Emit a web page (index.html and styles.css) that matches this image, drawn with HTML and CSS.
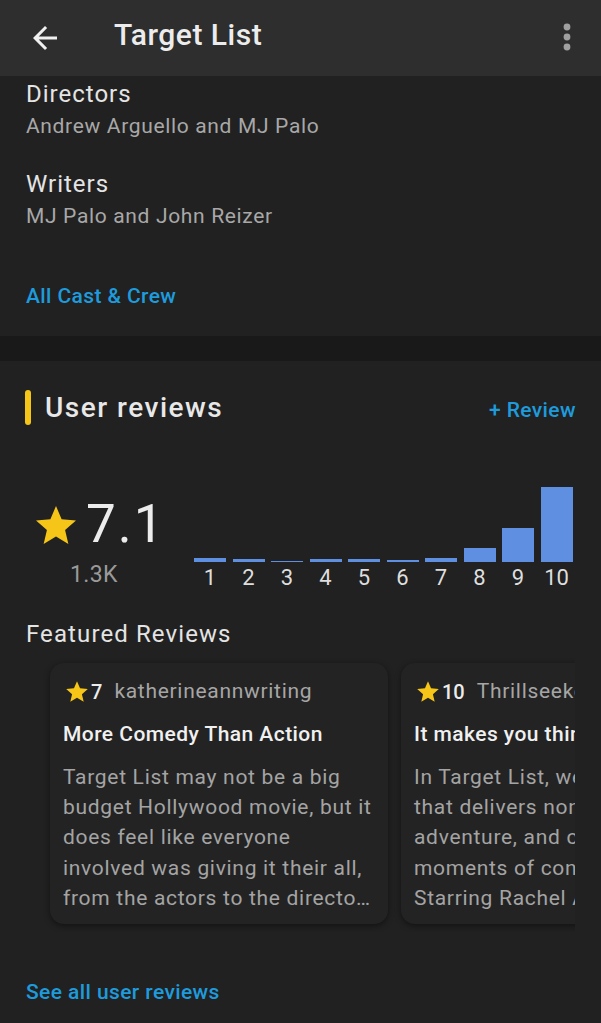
FILE: index.html
```html
<!DOCTYPE html>
<html>
<head>
<meta charset="utf-8">
<link rel="stylesheet" href="styles.css">
</head>
<body>
<header class="appbar">
  <svg class="back" width="36" height="36" viewBox="0 0 24 24"><path d="M20 11H7.83l5.59-5.59L12 4l-8 8 8 8 1.41-1.41L7.83 13H20v-2z" fill="#f0f0f0"/></svg>
  <h1 class="title">Target List</h1>
  <svg class="more" width="8" height="30" viewBox="0 0 8 30"><circle cx="4" cy="5" r="3.4" fill="#a0a0a0"/><circle cx="4" cy="15" r="3.4" fill="#a0a0a0"/><circle cx="4" cy="25" r="3.4" fill="#a0a0a0"/></svg>
</header>

<section class="crew">
  <div class="credit">
    <div class="credit-role">Directors</div>
    <div class="credit-names">Andrew Arguello and MJ Palo</div>
  </div>
  <div class="credit">
    <div class="credit-role">Writers</div>
    <div class="credit-names">MJ Palo and John Reizer</div>
  </div>
  <a class="link crew-link">All Cast &amp; Crew</a>
</section>

<div class="band"></div>

<section class="reviews">
  <div class="reviews-head">
    <h2 class="section-title"><span class="accent"></span>User reviews</h2>
    <a class="link add-review">+ Review</a>
  </div>

  <div class="rating-row">
    <div class="rating-summary">
      <div class="rating-main">
        <svg class="big-star" width="48" height="48" viewBox="0 0 24 24"><path d="M12 17.27L18.18 21l-1.64-7.03L22 9.24l-7.19-.61L12 2 9.19 8.63 2 9.24l5.46 4.73L5.82 21z" fill="#f5c518"/></svg>
        <span class="rating-value">7.1</span>
      </div>
      <div class="rating-count">1.3K</div>
    </div>
    <div class="histogram">
      <div class="hcol"><div class="bar" style="height:4px"></div><span>1</span></div>
      <div class="hcol"><div class="bar" style="height:3px"></div><span>2</span></div>
      <div class="hcol"><div class="bar" style="height:1px"></div><span>3</span></div>
      <div class="hcol"><div class="bar" style="height:3px"></div><span>4</span></div>
      <div class="hcol"><div class="bar" style="height:3px"></div><span>5</span></div>
      <div class="hcol"><div class="bar" style="height:2px"></div><span>6</span></div>
      <div class="hcol"><div class="bar" style="height:4px"></div><span>7</span></div>
      <div class="hcol"><div class="bar" style="height:14px"></div><span>8</span></div>
      <div class="hcol"><div class="bar" style="height:34px"></div><span>9</span></div>
      <div class="hcol"><div class="bar" style="height:75px"></div><span>10</span></div>
    </div>
  </div>

  <h3 class="featured-title">Featured Reviews</h3>

  <div class="carousel">
    <article class="card">
      <div class="card-meta">
        <svg class="small-star" width="26" height="26" viewBox="0 0 24 24"><path d="M12 17.27L18.18 21l-1.64-7.03L22 9.24l-7.19-.61L12 2 9.19 8.63 2 9.24l5.46 4.73L5.82 21z" fill="#f5c518"/></svg>
        <span class="card-score">7</span>
        <span class="card-user">katherineannwriting</span>
      </div>
      <div class="card-title">More Comedy Than Action</div>
      <p class="card-body"><span class="body-lead">Target List may not be a big budget Hollywood movie, but it does feel like everyone involved was giving it their all,</span><span class="body-tail">from the actors to the directors and writers.</span></p>
    </article>
    <article class="card">
      <div class="card-meta">
        <svg class="small-star" width="26" height="26" viewBox="0 0 24 24"><path d="M12 17.27L18.18 21l-1.64-7.03L22 9.24l-7.19-.61L12 2 9.19 8.63 2 9.24l5.46 4.73L5.82 21z" fill="#f5c518"/></svg>
        <span class="card-score">10</span>
        <span class="card-user">Thrillseeker</span>
      </div>
      <div class="card-title">It makes you think</div>
      <p class="card-body"><span class="body-lead">In Target List, we get a film that delivers nonstop action, adventure, and comedic moments of constant fun.</span><span class="body-tail">Starring Rachel Amanda Bryant and more.</span></p>
    </article>
  </div>

  <a class="link all-reviews">See all user reviews</a>
</section>
</body>
</html>
```

FILE: styles.css
```css
* { box-sizing: border-box; }
html, body { margin: 0; padding: 0; }
body {
  background: #212121;
  font-family: Roboto, "Noto Sans", sans-serif;
  color: #e6e6e6;
  width: 601px;
  height: 1023px;
  overflow: hidden;
}
.appbar {
  height: 76px;
  background: #2e2e2e;
  display: flex;
  align-items: center;
  padding: 0 0 7px 27px;
}
.back { flex: none; margin-top: 7px; }
.title {
  margin: 0 0 0 51px;
  font-size: 30px;
  line-height: 36px;
  font-weight: 500;
  color: #ececec;
  flex: 1;
  letter-spacing: 0.5px;
}
.more { margin-right: 30px; margin-top: 5px; }

.crew {
  padding: 3px 26px 27px;
}
.credit + .credit { margin-top: 28px; }
.credit-role {
  font-size: 24px;
  line-height: 30px;
  color: #e4e4e4;
  letter-spacing: 1px;
}
.credit-names {
  font-size: 21px;
  line-height: 30px;
  color: #a8a8a8;
  margin-top: 2px;
  letter-spacing: 0.66px;
}
.link {
  display: block;
  color: #1e9bdc;
  font-weight: 500;
  font-size: 21px;
  line-height: 26px;
  letter-spacing: 0.4px;
}
.crew-link { margin-top: 52px; }

.band { height: 25px; background: #191919; }

.reviews { padding: 29px 26px 0; }
.reviews-head {
  display: flex;
  align-items: center;
  justify-content: space-between;
}
.section-title {
  margin: 0;
  display: flex;
  align-items: center;
  font-size: 28px;
  font-weight: 500;
  color: #e8e8e8;
  line-height: 36px;
  letter-spacing: 1.5px;
  margin-left: -1px;
}
.accent {
  width: 6px;
  height: 35px;
  border-radius: 3px;
  background: #f5c518;
  margin-right: 14px;
  margin-top: -2px;
}
.add-review { margin-right: -1px; margin-top: 3px; }

.rating-row {
  display: flex;
  align-items: flex-end;
  margin-top: 61px;
}
.rating-summary {
  width: 168px;
  flex: none;
  display: flex;
  flex-direction: column;
  align-items: flex-start;
  padding-bottom: 3px;
}
.rating-main {
  display: flex;
  align-items: center;
  margin-left: 6px;
}
.big-star { margin-right: 6px; margin-top: 4px; }
.rating-value {
  font-size: 53px;
  line-height: 60px;
  color: #ececec;
  font-weight: 400;
  letter-spacing: 2px;
}
.rating-count {
  font-size: 23px;
  line-height: 26px;
  color: #9a9a9a;
  margin-left: 44px;
  margin-top: 8px;
  letter-spacing: 0.4px;
}
.histogram {
  display: flex;
  gap: 6.5px;
  align-items: flex-end;
}
.hcol {
  width: 32px;
  display: flex;
  flex-direction: column;
  align-items: center;
}
.bar {
  width: 100%;
  background: #5e8fe0;
}
.hcol span {
  font-size: 22px;
  line-height: 26px;
  color: #dedede;
  margin-top: 3px;
}

.featured-title {
  margin: 28px 0 0;
  font-size: 24px;
  font-weight: 400;
  line-height: 30px;
  color: #e4e4e4;
  letter-spacing: 1.1px;
}

.carousel {
  display: flex;
  gap: 13px;
  margin-top: 6px;
  width: 549px;
  overflow: hidden;
  padding: 8px 0 8px 24px;
}
.card {
  flex: none;
  width: 338px;
  background: #232323;
  border-radius: 14px;
  box-shadow: 0 2px 6px rgba(0,0,0,0.45);
  padding: 15px 14px 11px 13px;
  overflow: hidden;
}
.card-meta {
  display: flex;
  align-items: center;
  white-space: nowrap;
  height: 26px;
}
.small-star { margin-left: 1px; margin-right: 1px; margin-top: 1px; }
.card-score {
  font-size: 20px;
  font-weight: 500;
  color: #ececec;
  margin-right: 12px;
  line-height: 26px;
  margin-top: 2px;
}
.card-user {
  font-size: 21px;
  line-height: 26px;
  color: #a6a6a6;
  letter-spacing: 0.7px;
}
.card-title {
  margin-top: 16px;
  font-size: 21px;
  line-height: 28px;
  font-weight: 500;
  color: #f0f0f0;
  white-space: nowrap;
  letter-spacing: 0.45px;
}
.card-body {
  margin: 14px 0 0;
  font-size: 21px;
  line-height: 30.2px;
  color: #a4a4a4;
  letter-spacing: 0.7px;
}
.body-lead { display: block; }
.body-tail {
  display: block;
  white-space: nowrap;
  overflow: hidden;
  text-overflow: ellipsis;
}
.all-reviews { margin-top: 47px; }
```
